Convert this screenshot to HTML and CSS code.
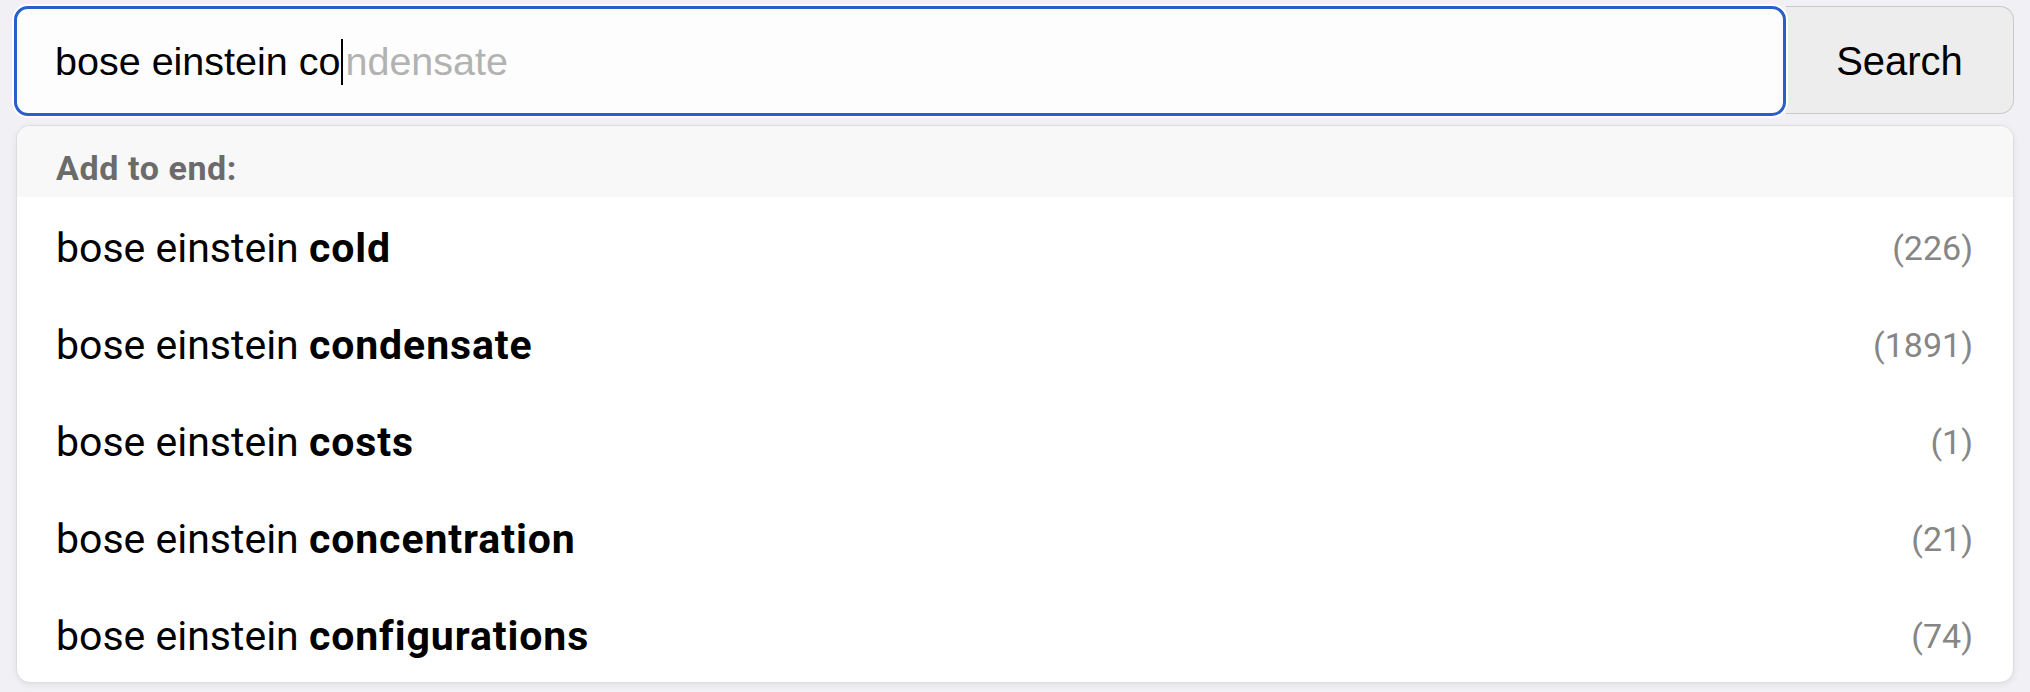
FILE: index.html
```html
<!DOCTYPE html>
<html lang="en">
<head>
<meta charset="utf-8">
<title>Search</title>
<link rel="stylesheet" href="styles.css">
</head>
<body>
<div class="page">
  <div class="search-row">
    <div class="search-input">
      <span class="typed">bose einstein co</span><span class="caret"></span><span class="ghost">ndensate</span>
    </div>
    <button class="search-btn" type="button">Search</button>
  </div>
  <div class="dropdown">
    <div class="dd-header">Add to end:</div>
    <ul class="dd-list">
      <li class="dd-item"><span class="term">bose einstein <b>cold</b></span><span class="count">(226)</span></li>
      <li class="dd-item"><span class="term">bose einstein <b>condensate</b></span><span class="count">(1891)</span></li>
      <li class="dd-item"><span class="term">bose einstein <b>costs</b></span><span class="count">(1)</span></li>
      <li class="dd-item"><span class="term">bose einstein <b>concentration</b></span><span class="count">(21)</span></li>
      <li class="dd-item"><span class="term">bose einstein <b>configurations</b></span><span class="count">(74)</span></li>
    </ul>
  </div>
</div>
</body>
</html>
```
FILE: styles.css
```css
* { box-sizing: border-box; }
html, body { margin: 0; padding: 0; }
body {
  background: #f1f1f5;
  width: 2030px;
  height: 692px;
  overflow: hidden;
}
.page {
  padding: 6px 16px 0 14px;
}
.search-row {
  display: flex;
  align-items: flex-start;
}
.search-input {
  flex: 1;
  height: 110px;
  border: 3px solid #2a5fc8;
  border-radius: 14px;
  background: #fdfdfd;
  box-shadow: 0 0 0 2px #ffffff;
  display: flex;
  align-items: center;
  padding-left: 38px;
  padding-top: 1px;
  font-family: "Liberation Sans", Arial, sans-serif;
  font-size: 39.5px;
  color: #000;
  position: relative;
  z-index: 1;
}
.typed { white-space: pre; }
.caret {
  display: inline-block;
  width: 2px;
  height: 46px;
  background: #000;
  margin-right: 2px;
  margin-left: 1px;
}
.ghost { color: #b2b2b2; }
.search-btn {
  width: 228px;
  height: 108px;
  margin: 0;
  border: 1px solid #c9c9c9;
  border-left: none;
  border-radius: 0 14px 14px 0;
  background: #ededed;
  font-family: "Liberation Sans", Arial, sans-serif;
  font-size: 40px;
  color: #000;
  padding: 2px 0 0;
}
.dropdown {
  margin: 9px 0 0 2px;
  background: #fff;
  border: 1px solid #dcdcdc;
  border-radius: 14px;
  box-shadow: 0 2px 6px rgba(0, 0, 0, 0.07);
  overflow: hidden;
  font-family: Roboto, "Noto Sans", sans-serif;
}
.dd-header {
  height: 71px;
  background: #f8f8f8;
  color: #6b6b6b;
  font-weight: 700;
  font-size: 34px;
  letter-spacing: 0.6px;
  display: flex;
  align-items: center;
  padding-left: 39px;
  padding-top: 12px;
}
.dd-list {
  list-style: none;
  margin: 0;
  padding: 0;
}
.dd-item {
  height: 97px;
  display: flex;
  align-items: center;
  justify-content: space-between;
  padding: 4px 40px 0 39px;
  font-size: 41px;
  color: #000;
}
.dd-item b { font-weight: 700; letter-spacing: 0.9px; }
.count {
  color: #868686;
  font-size: 34px;
}
```
